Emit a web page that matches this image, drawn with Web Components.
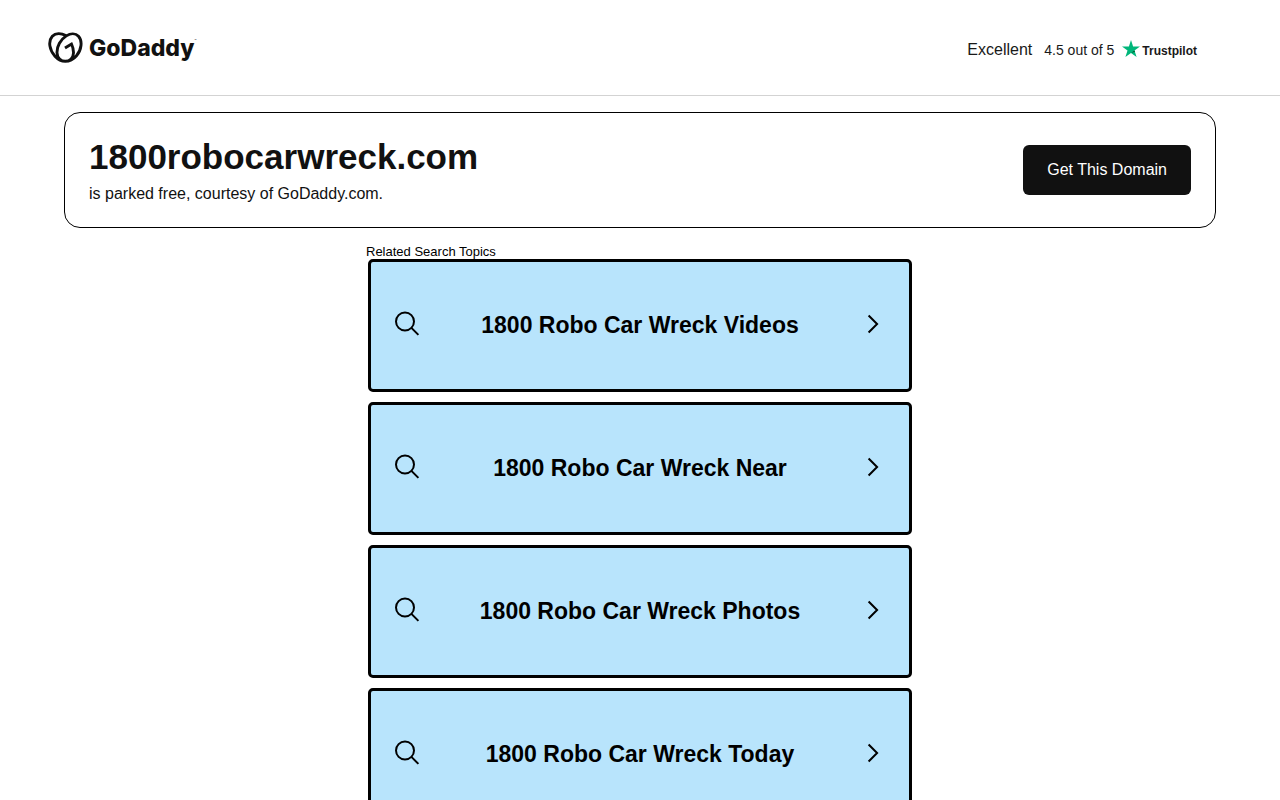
<!DOCTYPE html>
<html lang="en">
<head>
  <meta charset="utf-8">
  <meta name="viewport" content="width=device-width, initial-scale=1">
  <title>1800robocarwreck.com</title>
  <style>
    body {
      margin: 0;
      background: #fff;
      color: #111;
      font-family: "Liberation Sans", Arial, sans-serif;
      font-size: 16px;
    }
  </style>
</head>
<body>
  <site-header>
    <brand-logo></brand-logo>
    <trust-rating slot="rating" label="Excellent" score="4.5 out of 5"></trust-rating>
  </site-header>
  <main>
    <domain-banner domain="1800robocarwreck.com">
      is parked free, courtesy of GoDaddy.com.
      <a slot="action" href="#get-domain">Get This Domain</a>
    </domain-banner>
    <topic-list heading="Related Search Topics">
      <topic-card href="#videos">1800 Robo Car Wreck Videos</topic-card>
      <topic-card href="#near">1800 Robo Car Wreck Near</topic-card>
      <topic-card href="#photos">1800 Robo Car Wreck Photos</topic-card>
      <topic-card href="#today">1800 Robo Car Wreck Today</topic-card>
    </topic-list>
  </main>

  <script>
    class SiteHeader extends HTMLElement {
      connectedCallback() {
        this.attachShadow({ mode: 'open' });
        this.shadowRoot.innerHTML = `
          <style>
            :host {
              display: block;
              border-bottom: 1px solid #d3d3d3;
            }

            header {
              display: flex;
              justify-content: space-between;
              align-items: center;
              min-height: 95px;
              padding: 0 83px 0 48px;
              box-sizing: border-box;
            }
          </style>
          <header>
            <slot></slot>
            <slot name="rating"></slot>
          </header>
        `;
      }
    }

    class BrandLogo extends HTMLElement {
      connectedCallback() {
        this.attachShadow({ mode: 'open' });
        this.shadowRoot.innerHTML = `
          <style>
            :host { display: block; }

            a {
              display: flex;
              align-items: center;
              gap: 6px;
              color: #111;
              text-decoration: none;
            }

            svg { display: block; }

            .name {
              font: 800 23px/32px Inter, sans-serif;
            }

            sup {
              font-size: 3px;
              line-height: 1;
              vertical-align: 14px;
            }
          </style>
          <a href="#home" aria-label="GoDaddy">
            <svg width="35" height="31" viewBox="0 0 35 31" fill="none" stroke="currentColor" stroke-width="2.9" aria-hidden="true">
              <path d="M17.8 3.6C13 .9 7.600.9 4.300 4.300C-.2 9.500 1.500 18 7 24.200C10 27.500 13.500 29.300 17.300 29.300C21.500 29.300 25.500 27.200 28.500 23.700C33.600 17.700 34.700 8.900 30.500 4.300C27.500 1 22.500 1.200 18.300 3.900C12.500 7.600 8.800 14.300 9 20.700C9.200 25.800 12.800 29.300 17.300 29.300C22 29.300 25.300 25.700 25.500 21C25.600 17.900 24.900 15 23.500 12L17 16.100"/>
            </svg>
            <span class="name">GoDaddy<sup>™</sup></span>
          </a>
        `;
      }
    }

    class TrustRating extends HTMLElement {
      connectedCallback() {
        this.attachShadow({ mode: 'open' });
        this.shadowRoot.innerHTML = `
          <style>
            :host {
              display: flex;
              align-items: center;
              padding-top: 4px;
              color: #191919;
            }

            .text {
              display: flex;
              align-items: baseline;
              gap: 12px;
              margin-right: 8px;
            }

            .score { font-size: 14px; }

            .mark {
              display: flex;
              align-items: center;
              gap: 2px;
              padding-top: 2px;
              font-size: 12px;
              font-weight: 700;
              line-height: 18px;
            }

            svg {
              display: block;
              margin-bottom: 4px;
            }
          </style>
          <span class="text">
            <span>${this.getAttribute('label')}</span>
            <span class="score">${this.getAttribute('score')}</span>
          </span>
          <span class="mark">
            <svg width="18" height="17" viewBox="0 0 18 17" aria-hidden="true">
              <path fill="#00b67a" d="M9 0l2.1 6.4H18l-5.5 4 2.1 6.5L9 12.9l-5.6 4 2.1-6.5L0 6.4h6.9z"/>
              <path fill="#005128" d="M13 11.8l-.5-1.4L9 12.9z"/>
            </svg>
            <span>Trustpilot</span>
          </span>
        `;
      }
    }

    class DomainBanner extends HTMLElement {
      connectedCallback() {
        this.attachShadow({ mode: 'open' });
        this.shadowRoot.innerHTML = `
          <style>
            :host {
              display: block;
              margin: 16px 64px;
            }

            section {
              display: flex;
              justify-content: space-between;
              align-items: center;
              gap: 24px;
              padding: 21px 24px;
              border: 1px solid #000;
              border-radius: 16px;
            }

            h1 {
              margin: 0;
              font-size: 35px;
              line-height: 46px;
            }

            p {
              margin: 2px 0 0;
              line-height: 24px;
            }

            ::slotted(a) {
              flex: none;
              padding: 13px 24px;
              border-radius: 6px;
              background: #111;
              color: #fff;
              line-height: 24px;
              text-decoration: none;
            }
          </style>
          <section>
            <div>
              <h1>${this.getAttribute('domain')}</h1>
              <p><slot></slot></p>
            </div>
            <slot name="action"></slot>
          </section>
        `;
      }
    }

    class TopicList extends HTMLElement {
      connectedCallback() {
        this.attachShadow({ mode: 'open' });
        this.shadowRoot.innerHTML = `
          <style>
            :host {
              display: block;
              max-width: 548px;
              margin: 0 auto;
              color: #000;
            }

            h2 {
              margin: 0;
              font-size: 13px;
              font-weight: 400;
              line-height: 15px;
            }

            .topics {
              display: grid;
              gap: 10px;
              padding: 0 2px 10px;
            }
          </style>
          <h2>${this.getAttribute('heading')}</h2>
          <div class="topics"><slot></slot></div>
        `;
      }
    }

    class TopicCard extends HTMLElement {
      connectedCallback() {
        this.attachShadow({ mode: 'open' });
        this.shadowRoot.innerHTML = `
          <style>
            :host { display: block; }

            a {
              display: flex;
              align-items: center;
              min-height: 133px;
              padding: 0 24px 2px;
              box-sizing: border-box;
              border: 3px solid #000;
              border-radius: 5px;
              background: #b8e4fc;
              color: #000;
              text-decoration: none;
            }

            .title {
              flex: 1;
              text-align: center;
              font-size: 23px;
              font-weight: 700;
              line-height: 28px;
            }

            svg {
              flex: none;
              margin-bottom: 2px;
              fill: none;
              stroke: currentColor;
              stroke-width: 2;
            }
          </style>
          <a href="${this.getAttribute('href')}">
            <svg width="25" height="25" viewBox="0 0 25 25" aria-hidden="true">
              <circle cx="10" cy="10.500" r="9"/>
              <path d="M16.400 16.900L23.400 23.900"/>
            </svg>
            <span class="title"><slot></slot></span>
            <svg width="25" height="25" viewBox="0 0 25 25" aria-hidden="true">
              <path d="M8.600 4.500l8.500 8.500-8.500 8.500"/>
            </svg>
          </a>
        `;
      }
    }

    customElements.define('site-header', SiteHeader);
    customElements.define('brand-logo', BrandLogo);
    customElements.define('trust-rating', TrustRating);
    customElements.define('domain-banner', DomainBanner);
    customElements.define('topic-list', TopicList);
    customElements.define('topic-card', TopicCard);
  </script>
</body>
</html>
